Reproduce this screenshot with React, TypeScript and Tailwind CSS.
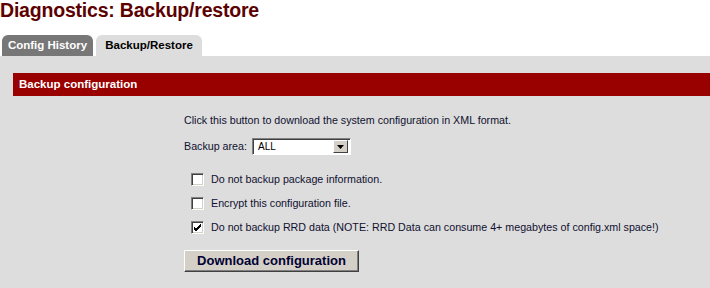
import React from 'react';

const font = { fontFamily: '"Liberation Sans", Arial, sans-serif' };

function Checkbox({ checked = false }: { checked?: boolean }) {
  return (
    <span className="relative inline-block w-[13px] h-[13px] bg-white border border-t-[#808080] border-l-[#808080] border-b-white border-r-white shadow-[inset_1px_1px_0_#404040,inset_-1px_-1px_0_#d4d0c8]">
      {checked && (
        <svg className="absolute left-[1px] top-[1px]" width="9" height="9" viewBox="0 0 9 9">
          <path d="M1 4 L3 6 L8 1 M1 5 L3 7 L8 2 M1 6 L3 8 L8 3" stroke="#000" strokeWidth="1" fill="none" />
        </svg>
      )}
    </span>
  );
}

export default function App() {
  const options = [
    { label: 'Do not backup package information.', checked: false },
    { label: 'Encrypt this configuration file.', checked: false },
    { label: 'Do not backup RRD data (NOTE: RRD Data can consume 4+ megabytes of config.xml space!)', checked: true },
  ];

  return (
    <div className="w-[710px] h-[288px] bg-white overflow-hidden flex flex-col" style={font}>
      <h1 className="text-[19.5px] leading-[20px] font-bold text-[#5c0000] tracking-[-0.2px]">
        Diagnostics: Backup/restore
      </h1>

      {/* Tabs */}
      <div className="mt-[15px] flex items-end gap-[3px] pl-[2px] h-[21px]">
        <div className="h-[21px] w-[91px] rounded-t-[6px] bg-[#777777] text-white text-[11.5px] font-bold flex items-center justify-center">
          Config History
        </div>
        <div className="h-[21px] w-[106px] rounded-t-[6px] bg-[#dddddd] text-black text-[11.5px] font-bold flex items-center justify-center">
          Backup/Restore
        </div>
      </div>

      {/* Content */}
      <div className="flex-1 bg-[#dddddd] pt-[17px] pl-[13px]">
        <div className="h-[23px] bg-[#990000] text-white text-[11.5px] font-bold flex items-center pl-[6px]">
          Backup configuration
        </div>

        <div className="pl-[171px] text-[10.7px] text-[#101030]">
          <p className="mt-[17px] leading-[14px]">
            Click this button to download the system configuration in XML format.
          </p>

          <div className="mt-[11px] flex items-center gap-[5px] h-[17px]">
            <span>Backup area:</span>
            <div className="h-[17px] w-[99px] bg-white border border-t-[#808080] border-l-[#808080] border-b-white border-r-white shadow-[inset_1px_1px_0_#404040] flex items-center justify-between pl-[5px] pr-[2px]">
              <span className="text-[10px] text-black">ALL</span>
              <span className="w-[15px] h-[13px] bg-[#d4d0c8] border border-t-white border-l-white border-b-[#404040] border-r-[#404040] flex items-center justify-center">
                <svg width="7" height="4" viewBox="0 0 7 4">
                  <path d="M0 0 H7 L3.5 4 Z" fill="#000" />
                </svg>
              </span>
            </div>
          </div>

          <div className="mt-[18px] flex flex-col gap-[11px] pl-[7px]">
            {options.map((o) => (
              <label key={o.label} className="flex items-center gap-[7px] h-[13px]">
                <Checkbox checked={o.checked} />
                <span>{o.label}</span>
              </label>
            ))}
          </div>

          <button className="mt-[16px] h-[22px] w-[175px] bg-[#d4d0c8] border border-t-white border-l-white border-b-[#404040] border-r-[#404040] shadow-[inset_-1px_-1px_0_#808080] text-[13px] font-bold text-[#000033] flex items-center justify-center">
            Download configuration
          </button>
        </div>
      </div>
    </div>
  );
}
